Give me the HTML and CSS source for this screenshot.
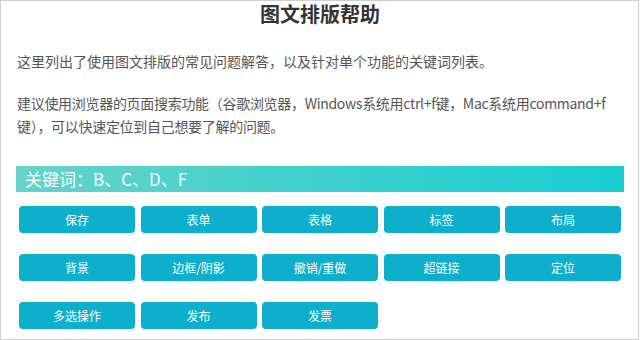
FILE: index.html
```html
<!DOCTYPE html>
<html lang="zh-CN">
<head>
    <meta charset="UTF-8">
    <meta name="viewport" content="width=device-width, initial-scale=1.0">
    <title>图文排版帮助</title>
    <link rel="stylesheet" href="styles.css">
</head>
<body>
    <div class="frame">
        <div class="content">
            <h1 class="title">图文排版帮助</h1>
            <p class="intro">这里列出了使用图文排版的常见问题解答，以及针对单个功能的关键词列表。</p>
            <p class="intro tip">建议使用浏览器的页面搜索功能（谷歌浏览器，Windows系统用ctrl+f键，Mac系统用command+f键），可以快速定位到自己想要了解的问题。</p>
            <div class="keyword-bar">关键词：B、C、D、F</div>
            <div class="keyword-grid">
                <a class="kw-btn" href="#">保存</a>
                <a class="kw-btn" href="#">表单</a>
                <a class="kw-btn" href="#">表格</a>
                <a class="kw-btn" href="#">标签</a>
                <a class="kw-btn" href="#">布局</a>
                <a class="kw-btn" href="#">背景</a>
                <a class="kw-btn" href="#">边框/阴影</a>
                <a class="kw-btn" href="#">撤销/重做</a>
                <a class="kw-btn" href="#">超链接</a>
                <a class="kw-btn" href="#">定位</a>
                <a class="kw-btn" href="#">多选操作</a>
                <a class="kw-btn" href="#">发布</a>
                <a class="kw-btn" href="#">发票</a>
            </div>
        </div>
    </div>
</body>
</html>
```

FILE: styles.css
```css
body {
    margin: 0;
    padding: 0;
    background-color: #fff;
    font-family: "Noto Sans CJK SC", sans-serif;
    overflow: hidden;
}
.frame {
    width: 639px;
    height: 340px;
    box-sizing: border-box;
    border: 1px solid #cfcfcf;
    overflow: hidden;
}
.content {
    padding: 0 14px 0 15px;
}
.title {
    margin: 0;
    font-size: 20px;
    font-weight: bold;
    line-height: 26px;
    color: #333;
    text-align: center;
}
.intro {
    margin: 23px 0 0;
    padding-left: 1px;
    font-size: 14px;
    line-height: 23px;
    color: #555;
}
.tip {
    margin-top: 19px;
    width: 592px;
    letter-spacing: -0.3px;
}
.keyword-bar {
    margin-top: 28px;
    height: 26px;
    line-height: 26px;
    padding-left: 9px;
    font-size: 17px;
    color: #fff;
    background: linear-gradient(to right, #66d3ca, #17ced2);
}
.keyword-grid {
    display: grid;
    grid-template-columns: repeat(5, 1fr);
    column-gap: 5.5px;
    row-gap: 21px;
    margin-top: 14px;
    padding: 0 3px;
}
.kw-btn {
    display: block;
    height: 27px;
    line-height: 27px;
    border-radius: 4px;
    background-color: #0eaecd;
    color: #fff;
    font-size: 12px;
    text-align: center;
    text-decoration: none;
}
```
